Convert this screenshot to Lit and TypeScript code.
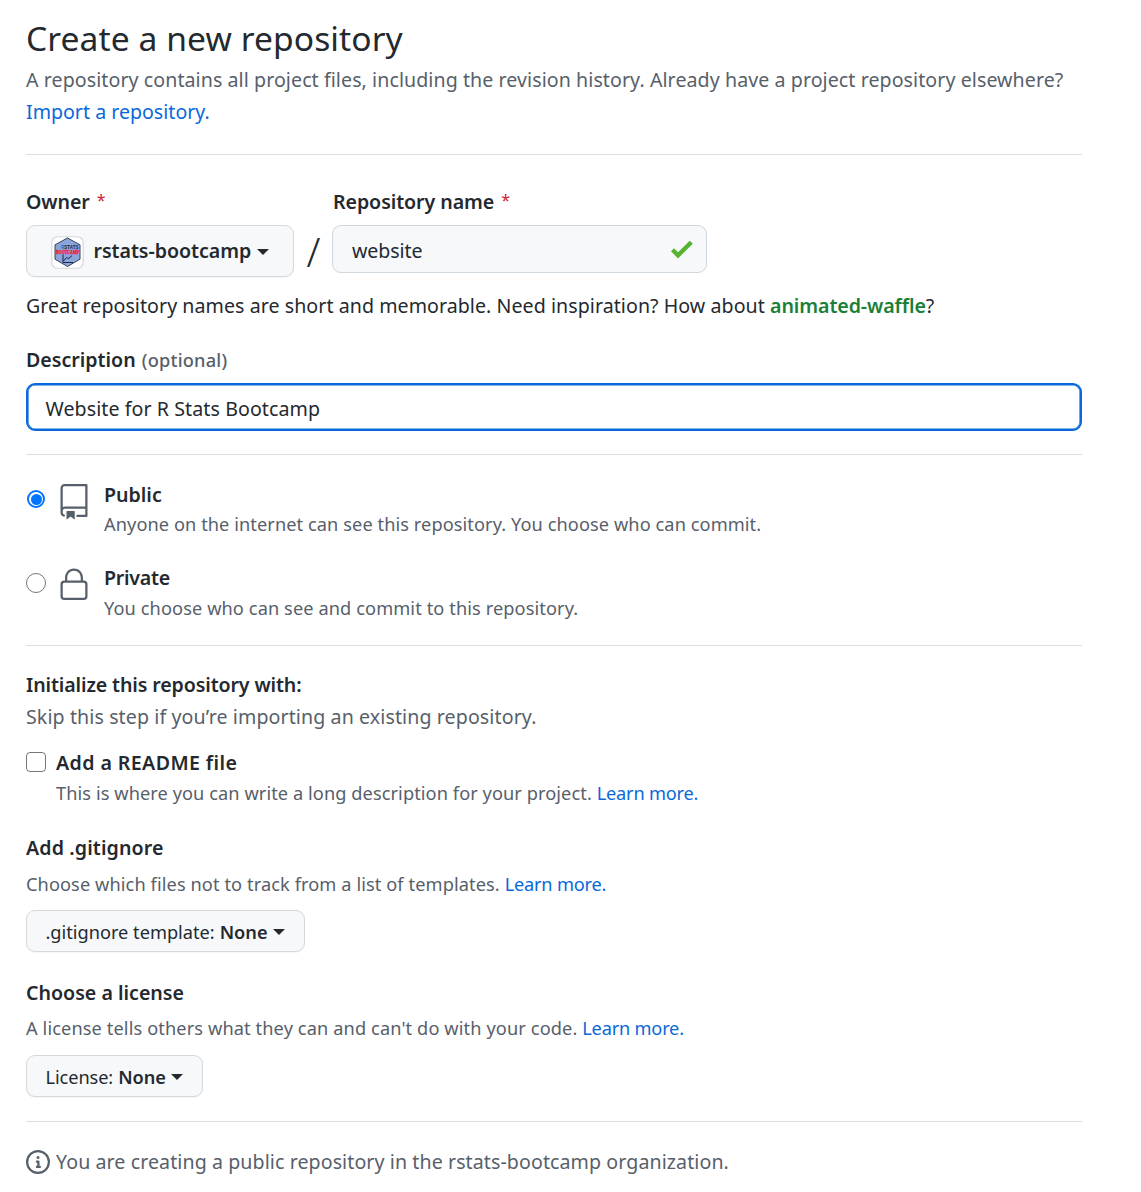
import { LitElement, html, css } from "lit";
import { customElement } from "lit/decorators.js";

const caret = html`<i class="caret"></i>`;

@customElement("app-root")
export class AppRoot extends LitElement {
  static styles = css`
    :host { display: block; background: #fff; color: #24292f; font-family: "Noto Sans", "Open Sans", sans-serif; font-size: 19.6px; line-height: 32px; height: 1192px; overflow: hidden; }
    * { box-sizing: border-box; }
    .page { width: 1082px; padding: 14px 0 0 26px; display: flex; flex-direction: column; white-space: nowrap; }
    h1, p, h2 { margin: 0; font-weight: 400; }
    h1 { font-size: 33.6px; line-height: 48px; height: 50px; letter-spacing: .08px; }
    h2, b, .label { font-size: inherit; font-weight: 600; }
    .lead { letter-spacing: .075px; }
    .muted { color: #57606a; }
    .small { font-size: 18.2px; line-height: 28px; letter-spacing: .08px; }
    .link { color: #0969da; }
    .small .link { letter-spacing: -.2px; }
    .loose { letter-spacing: .1px; }
    .looser { letter-spacing: .12px; }
    .airy { letter-spacing: .4px; }
    .tight { letter-spacing: -.12px; }
    .tighter { letter-spacing: -.25px; }
    .rule { height: 1px; background: #d8dee4; flex: none; }
    .rule.first { margin-top: 26px; }
    .rule.mid { margin-top: 23px; }
    .rule.last { margin-top: 24px; }
    .names { display: flex; margin-top: 31px; }
    .field { display: flex; flex-direction: column; gap: 7px; }
    .label { height: 32px; letter-spacing: -.07px; }
    .label.name { padding-left: 1px; }
    .req { color: #cf222e; font-size: 16px; line-height: 0; font-weight: 400; margin-left: 2px; vertical-align: 3px; }
    .slash { width: 38px; padding: 42px 0 0 1px; text-align: center; font-size: 40px; font-weight: 300; line-height: 48px; }
    .btn { display: flex; align-items: center; border: 1px solid #d5d9dd; border-radius: 9px; background: #f6f8fa; box-shadow: 0 1px 0 rgba(27,31,36,.04); }
    .owner { width: 268px; height: 52px; padding-left: 24px; font-weight: 600; letter-spacing: -.04px; }
    .owner .caret { margin: 1px 0 0 6px; }
    .avatar { width: 33px; height: 33px; margin: 3px 9.5px 0 0; overflow: visible; }
    .caret { border: 6px solid transparent; border-top-color: currentColor; border-bottom: 0; margin-left: 5px; }
    .input { height: 48px; border: 1px solid #d0d7de; border-radius: 9px; background: #f6f8fa; padding: 3px 0 0 19px; display: flex; align-items: center; }
    .repo { width: 375px; justify-content: space-between; padding-right: 12px; letter-spacing: -.1px; }
    .tick { width: 24px; height: 20px; margin-top: -2px; }
    .hint { margin-top: 13px; letter-spacing: .058px; }
    .green { color: #1a7f37; letter-spacing: -.08px; }
    .desc-label { margin-top: 22px; height: 32px; }
    .optional { font-weight: 500; letter-spacing: .2px; margin-left: 1px; }
    .desc { background: #fff; border: 2px solid #0969da; padding-left: 17.5px; margin-top: 7px; box-shadow: inset 0 0 0 .6px #0969da; letter-spacing: .08px; }
    .choice { display: flex; }
    .choice.public { margin-top: 23px; }
    .choice.private { margin-top: 22px; }
    .choice.public h2, .choice.private h2 { margin-top: 1px; }
    .choice.public p { margin: -1px 0 1px; }
    .radio { width: 20px; height: 20px; border: 1.5px solid #767676; border-radius: 50%; margin: 12px 10px 0 0; display: grid; place-items: center; }
    .radio.on { border: 2px solid #0075ff; width: 18px; height: 18px; margin: 12px 11px 0 1px; }
    .radio.on::after { content: ""; width: 11px; height: 11px; border-radius: 50%; background: #0075ff; }
    .glyph { width: 36px; height: 36px; fill: #57606a; margin: 6px 12px 0 0; }
    .choice.readme { margin-top: 14px; }
    .box { width: 20px; height: 20px; border: 1.5px solid #767676; border-radius: 4px; margin: 5px 10px 0 0; }
    .head { margin-top: 25px; }
    .head.init { margin-top: 23px; }
    .ignore-text { margin-top: 6px; letter-spacing: .095px; }
    .license-text { margin-top: 5px; letter-spacing: .115px; }
    .sel { height: 42px; padding: 2px 0 0 18.5px; font-size: 18.2px; }
    .sel b { margin-left: 5px; }
    .sel.ignore { width: 279px; margin-top: 12px; }
    .sel.license { width: 177px; margin-top: 13px; letter-spacing: -.08px; }
    .choice.note { margin-top: 24px; letter-spacing: .085px; }
    .info { width: 24px; height: 24px; fill: #57606a; margin: 4px 6px 0 0; }
    .logo-top { font: 700 5.4px "Liberation Sans", sans-serif; fill: #1a2340; letter-spacing: 0; }
    .logo-main { font: 700 5.2px "Liberation Serif", serif; fill: #f0182a; stroke: #f0182a; stroke-width: .3; letter-spacing: 0; }
  `;

  render() {
    return html`<main class="page">
      <h1>Create a new repository</h1>
      <p class="muted lead">A repository contains all project files, including the revision history. Already have a project repository elsewhere?</p>
      <p class="link">Import a repository.</p>
      <div class="rule first"></div>
      <div class="names">
        <div class="field"><div class="label">Owner <span class="req">*</span></div>
          <div class="btn owner">
            <svg class="avatar" viewBox="0 0 33 33"><rect x=".75" y=".75" width="31.500" height="31.500" rx="6" fill="#fff" stroke="#d5d9dd" stroke-width="1.200"/>
              <path d="M16.500 2L29 8.800V23.200L16.500 30.500L4 23.200V8.800Z" fill="#8aa5da" stroke="#3c4250" stroke-width="1"/>
              <text class="logo-top" x="10" y="12.700" textLength="17.500" lengthAdjust="spacingAndGlyphs"><tspan fill="#1b6fd0">R</tspan>STATS</text>
              <text class="logo-main" x="5" y="17.500" textLength="23" lengthAdjust="spacingAndGlyphs">BOOTCAMP</text>
              <path d="M12 18.500V26.500H22M12.500 25l3-3.400 2 1 3.500-3" fill="none" stroke="#1a2340" stroke-width="1"/></svg>
            <span>rstats-bootcamp</span>${caret}</div></div>
        <div class="slash">/</div>
        <div class="field"><div class="label name">Repository name <span class="req">*</span></div>
          <div class="input repo"><span>website</span><svg class="tick" viewBox="0 0 24 20"><path d="M1 11.200l3-3 4 4L19.800 .8l3 3L8 18.400Z" fill="#55b232"/></svg></div></div>
      </div>
      <p class="hint">Great repository names are short and memorable. Need inspiration? How about <b class="green">animated-waffle</b>?</p>
      <div class="desc-label"><b>Description</b> <span class="muted small optional">(optional)</span></div>
      <div class="input desc">Website for R Stats Bootcamp</div>
      <div class="rule mid"></div>
      <div class="choice public"><i class="radio on"></i>
        <svg class="glyph" viewBox="0 0 24 24"><path fill-rule="evenodd" d="M3 2.750A2.750 2.750 0 015.750 0h14.500a.75.75 0 01.75.75v20.500a.75.75 0 01-.75.75h-6a.75.75 0 010-1.500h5.250v-4H6A1.500 1.500 0 004.500 18v.75c0 .716.43 1.334 1.050 1.605a.75.75 0 01-.6 1.374A3.250 3.250 0 013 18.750v-16zM19.500 1.500V15H6c-.546 0-1.059.146-1.500.401V2.750c0-.69.56-1.250 1.250-1.250H19.500z"/><path d="M7 18.250a.25.25 0 01.25-.25h5a.25.25 0 01.25.25v5.010a.25.25 0 01-.397.201l-2.206-1.604a.25.25 0 00-.294 0L7.397 23.460a.25.25 0 01-.397-.2v-5.010z"/></svg>
        <div><h2>Public</h2><p class="muted small">Anyone on the internet can see this repository. You choose who can commit.</p></div></div>
      <div class="choice private"><i class="radio"></i>
        <svg class="glyph" viewBox="0 0 24 24"><path fill-rule="evenodd" d="M6 9V7.250C6 3.845 8.503 1 12 1s6 2.845 6 6.250V9h.5a2.500 2.500 0 012.500 2.500v8a2.500 2.500 0 01-2.500 2.500h-13A2.500 2.500 0 013 19.500v-8A2.500 2.500 0 015.500 9H6zm1.500-1.750C7.500 4.580 9.422 2.500 12 2.500c2.578 0 4.500 2.080 4.500 4.750V9h-9V7.250zm-3 4.250a1 1 0 011-1h13a1 1 0 011 1v8a1 1 0 01-1 1h-13a1 1 0 01-1-1v-8z"/></svg>
        <div><h2 class="tighter">Private</h2><p class="muted small loose">You choose who can see and commit to this repository.</p></div></div>
      <div class="rule mid"></div>
      <h2 class="head init tight">Initialize this repository with:</h2>
      <p class="muted loose">Skip this step if you’re importing an existing repository.</p>
      <div class="choice readme"><i class="box"></i><div><h2 class="airy">Add a README file</h2>
        <p class="muted small">This is where you can write a long description for your project. <span class="link">Learn more.</span></p></div></div>
      <h2 class="head looser">Add .gitignore</h2>
      <p class="muted small ignore-text">Choose which files not to track from a list of templates. <span class="link">Learn more.</span></p>
      <div class="btn sel ignore"><span>.gitignore template:</span><b>None</b>${caret}</div>
      <h2 class="head">Choose a license</h2>
      <p class="muted small license-text">A license tells others what they can and can't do with your code. <span class="link">Learn more.</span></p>
      <div class="btn sel license"><span>License:</span><b>None</b>${caret}</div>
      <div class="rule last"></div>
      <div class="choice note muted"><svg class="info" viewBox="0 0 16 16"><path fill-rule="evenodd" d="M8 1.500a6.500 6.500 0 100 13 6.500 6.500 0 000-13zM0 8a8 8 0 1116 0A8 8 0 010 8zm6.500-.25A.75.75 0 017.250 7h1a.75.75 0 01.75.75v2.750h.25a.75.75 0 010 1.500h-2a.75.75 0 010-1.500h.25v-2h-.25a.75.75 0 01-.75-.75zM8 6a1 1 0 100-2 1 1 0 000 2z"/></svg><span>You are creating a public repository in the rstats-bootcamp organization.</span></div>
    </main>`;
  }
}
